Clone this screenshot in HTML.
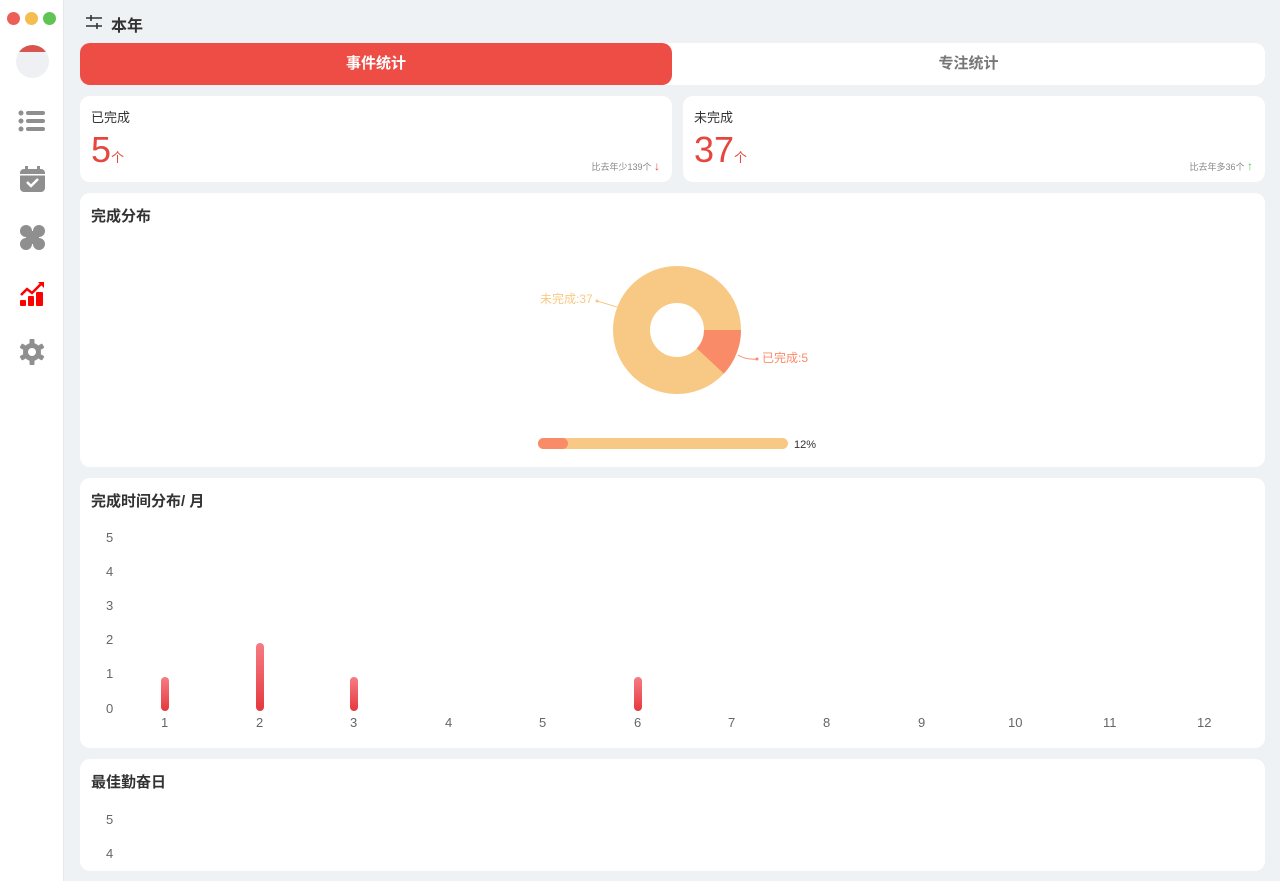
<!DOCTYPE html>
<html><head><meta charset="utf-8"><style>
*{box-sizing:border-box;margin:0;padding:0}
html,body{width:1280px;height:881px;overflow:hidden}
body{background:#eef2f5;font-family:"Liberation Sans","Noto Sans CJK SC",sans-serif;position:relative}
.side{position:absolute;left:0;top:0;width:64px;height:881px;background:#fff;border-right:1px solid #e5e8eb}
.dot{position:absolute;top:12px;width:13px;height:13px;border-radius:50%}
.card{position:absolute;background:#fff;border-radius:10px}
.t{position:absolute;font-size:15px;font-weight:bold;color:#333}
.ax{position:absolute;font-size:13px;color:#666}
.bar{position:absolute;width:8px;border-radius:4px;background:linear-gradient(#f77c83,#e4393f)}
</style></head><body>
<div class="side">
<div class="dot" style="left:7px;background:#ec5f56"></div>
<div class="dot" style="left:25px;background:#f5bd4f"></div>
<div class="dot" style="left:43px;background:#5fc453"></div>
<div style="position:absolute;left:16px;top:45px;width:33px;height:33px;border-radius:50%;background:#eef0f3;overflow:hidden"><div style="height:7px;background:#d9534f"></div></div>
<svg style="position:absolute;left:18px;top:109px" width="28" height="26" viewBox="0 0 28 26" fill="#8f8f8f"><circle cx="3" cy="4" r="2.5"/><circle cx="3" cy="12" r="2.5"/><circle cx="3" cy="20" r="2.5"/><rect x="8" y="2" width="19" height="4" rx="2"/><rect x="8" y="10" width="19" height="4" rx="2"/><rect x="8" y="18" width="19" height="4" rx="2"/></svg>
<svg style="position:absolute;left:20px;top:166px" width="25" height="26" viewBox="0 0 25 26"><rect x="0" y="3" width="25" height="23" rx="4" fill="#8f8f8f"/><rect x="5" y="0" width="3" height="6" fill="#8f8f8f"/><rect x="17" y="0" width="3" height="6" fill="#8f8f8f"/><rect x="0" y="8" width="25" height="1.5" fill="#fff"/><path d="M7 16l4 4 7-7" stroke="#fff" stroke-width="2.5" fill="none"/></svg>
<svg style="position:absolute;left:20px;top:225px" width="25" height="25" viewBox="0 0 25 25" fill="#8f8f8f"><circle cx="6" cy="6" r="6"/><circle cx="19" cy="6" r="6"/><circle cx="6" cy="19" r="6"/><circle cx="19" cy="19" r="6"/><rect x="6" y="6" width="13" height="13"/></svg>
<svg style="position:absolute;left:20px;top:282px" width="25" height="24" viewBox="0 0 25 24" fill="#f00"><path d="M1 13l6-6 5 4 9-9" stroke="#f00" stroke-width="2.5" fill="none"/><path d="M18 0h6v6z"/><rect x="0" y="18" width="6" height="6" rx="1"/><rect x="8" y="14" width="6" height="10" rx="1"/><rect x="16" y="10" width="7" height="14" rx="1"/></svg>
<svg style="position:absolute;left:19px;top:339px" width="26" height="26" viewBox="0 0 26 26"><g fill="#8f8f8f"><circle cx="13" cy="13" r="9"/><g id="tt"><rect x="10.5" y="0" width="5" height="6" rx="1"/><rect x="10.5" y="20" width="5" height="6" rx="1"/></g><use href="#tt" transform="rotate(60 13 13)"/><use href="#tt" transform="rotate(120 13 13)"/></g><circle cx="13" cy="13" r="4" fill="#fff"/></svg>
</div>
<svg style="position:absolute;left:86px;top:15px" width="16" height="14" viewBox="0 0 16 14" stroke="#333" stroke-width="1.6"><path d="M0 3h16M0 11h16M5 0v6M11 8v6"/></svg>
<div style="position:absolute;left:111px;top:12px;font-size:16px;font-weight:bold;color:#333">本年</div>
<div class="card" style="left:80px;top:43px;width:1185px;height:42px"></div>
<div style="position:absolute;left:80px;top:43px;width:592px;height:42px;background:#ee4d45;border-radius:10px;color:#fff;font-weight:bold;font-size:15px;text-align:center;line-height:42px">事件统计</div>
<div style="position:absolute;left:672px;top:43px;width:593px;height:42px;color:#777;font-weight:bold;font-size:15px;text-align:center;line-height:42px">专注统计</div>

<div class="card" style="left:80px;top:96px;width:592px;height:86px">
<div style="position:absolute;left:11px;top:11px;font-size:13px;color:#333">已完成</div>
<div style="position:absolute;left:11px;top:33px;font-size:36px;color:#e5473f">5<span style="font-size:13px">个</span></div>
<div style="position:absolute;right:12px;top:63px;font-size:9px;color:#888">比去年少139个 <span style="color:#e5473f;font-size:12px;font-weight:bold">↓</span></div></div>
<div class="card" style="left:683px;top:96px;width:582px;height:86px">
<div style="position:absolute;left:11px;top:11px;font-size:13px;color:#333">未完成</div>
<div style="position:absolute;left:11px;top:33px;font-size:36px;color:#e5473f">37<span style="font-size:13px">个</span></div>
<div style="position:absolute;right:12px;top:63px;font-size:9px;color:#888">比去年多36个 <span style="color:#5fc453;font-size:12px;font-weight:bold">↑</span></div></div>

<div class="card" style="left:80px;top:193px;width:1185px;height:274px"><div class="t" style="left:11px;top:12px">完成分布</div></div>
<svg style="position:absolute;left:520px;top:250px" width="320" height="210" viewBox="520 250 320 210">
<circle cx="677" cy="330" r="45.5" fill="none" stroke="#f8c984" stroke-width="37"/>
<path d="M741 330A64 64 0 0 1 723.9 373.6L696.8 348.4A27 27 0 0 0 704 330z" fill="#f98b68"/>
<path d="M617 307l-20-6" stroke="#f8c984" fill="none"/><circle cx="597" cy="301" r="1.5" fill="#f8c984"/>
<path d="M738 355q8 5 19 4" stroke="#f98b68" fill="none"/><circle cx="757" cy="359" r="1.5" fill="#f98b68"/>
<text x="540" y="303" font-size="12" fill="#f8c984" font-family="Liberation Sans,Noto Sans CJK SC,sans-serif">未完成:37</text>
<text x="762" y="362" font-size="12" fill="#f98b68" font-family="Liberation Sans,Noto Sans CJK SC,sans-serif">已完成:5</text>
<rect x="538" y="438" width="250" height="11" rx="5.5" fill="#f8c984"/><rect x="538" y="438" width="30" height="11" rx="5.5" fill="#f98b68"/>
<text x="794" y="448" font-size="11" fill="#333" font-family="Liberation Sans,sans-serif">12%</text></svg>

<div class="card" style="left:80px;top:478px;width:1185px;height:270px"><div class="t" style="left:11px;top:12px">完成时间分布/ 月</div></div>
<div class="ax" style="left:106px;top:530px">5</div><div class="ax" style="left:106px;top:564px">4</div><div class="ax" style="left:106px;top:598px">3</div><div class="ax" style="left:106px;top:632px">2</div><div class="ax" style="left:106px;top:666px">1</div><div class="ax" style="left:106px;top:701px">0</div>
<div class="bar" style="left:161px;top:677px;height:34px"></div>
<div class="bar" style="left:256px;top:643px;height:68px"></div>
<div class="bar" style="left:350px;top:677px;height:34px"></div>
<div class="bar" style="left:634px;top:677px;height:34px"></div>
<div style="position:absolute;top:715px;left:0;width:1280px;font-size:13px;color:#666">
<span style="position:absolute;left:161px">1</span><span style="position:absolute;left:256px">2</span><span style="position:absolute;left:350px">3</span><span style="position:absolute;left:445px">4</span><span style="position:absolute;left:539px">5</span><span style="position:absolute;left:634px">6</span><span style="position:absolute;left:728px">7</span><span style="position:absolute;left:823px">8</span><span style="position:absolute;left:918px">9</span><span style="position:absolute;left:1008px">10</span><span style="position:absolute;left:1103px">11</span><span style="position:absolute;left:1197px">12</span></div>

<div class="card" style="left:80px;top:759px;width:1185px;height:112px"><div class="t" style="left:11px;top:12px">最佳勤奋日</div></div>
<div class="ax" style="left:106px;top:812px">5</div><div class="ax" style="left:106px;top:846px">4</div>
</body></html>
